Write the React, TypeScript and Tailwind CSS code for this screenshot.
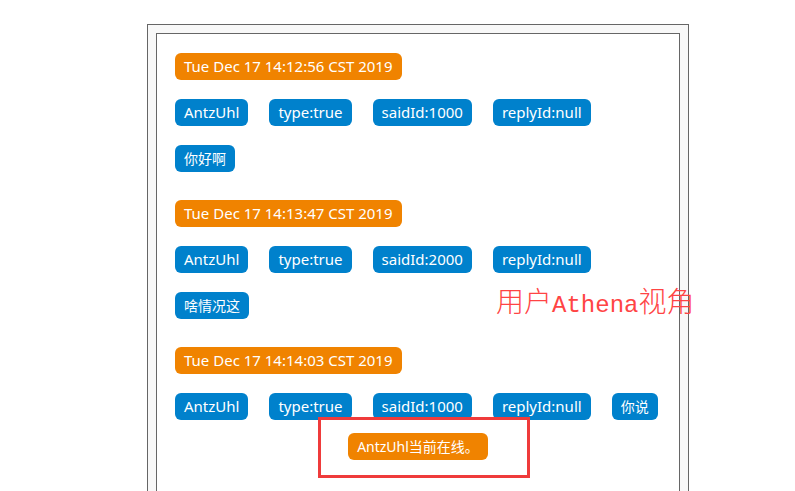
const font = { fontFamily: '"Noto Sans", "Noto Sans CJK SC", sans-serif' };

type Msg = {
  time: string;
  said: string;
  text: string;
  inline?: boolean;
};

const messages: Msg[] = [
  { time: "Tue Dec 17 14:12:56 CST 2019", said: "1000", text: "你好啊" },
  { time: "Tue Dec 17 14:13:47 CST 2019", said: "2000", text: "啥情况这" },
  { time: "Tue Dec 17 14:14:03 CST 2019", said: "1000", text: "你说", inline: true },
];

const Orange = ({ children }: { children: React.ReactNode }) => (
  <span className="inline-block whitespace-nowrap h-[27px] leading-[27px] px-[9px] rounded-[6px] bg-[#f08300] text-white text-[15px]">
    {children}
  </span>
);

const Blue = ({ children, cjk }: { children: React.ReactNode; cjk?: boolean }) => (
  <span
    className={
      cjk
        ? "inline-block shrink-0 whitespace-nowrap h-[27px] leading-[27px] px-[9px] rounded-[6px] bg-[#0081cc] text-white text-[14px]"
        : "inline-block shrink-0 whitespace-nowrap h-[27px] leading-[27px] px-[9px] rounded-[6px] bg-[#0081cc] text-white text-[15px]"
    }
  >
    {children}
  </span>
);

export default function App() {
  return (
    <div className="relative w-[795px] h-[491px] overflow-hidden bg-white" style={font}>
      <div className="ml-[147px] mt-[24px] w-[542px] h-[520px] border border-[#666] bg-[#f8f8f8] p-[8px]">
        <div className="h-full border border-[#666] bg-white pt-[19px] px-[18px]">
          {messages.map((m, i) => (
            <div key={i} className={i === 0 ? "flex flex-col items-start" : "flex flex-col items-start mt-[28px]"}>
              <Orange>{m.time}</Orange>
              <div className="flex gap-[21px] mt-[19px]">
                <Blue>AntzUhl</Blue>
                <Blue>type:true</Blue>
                <Blue>saidId:{m.said}</Blue>
                <Blue>replyId:null</Blue>
                {m.inline && <Blue cjk>{m.text}</Blue>}
              </div>
              {!m.inline && (
                <div className="mt-[19px]">
                  <Blue cjk>{m.text}</Blue>
                </div>
              )}
            </div>
          ))}
          <div className="flex justify-center mt-[13px] -mx-[18px]">
            <Orange>
              <span className="text-[14px]">AntzUhl当前在线。</span>
            </Orange>
          </div>
        </div>
      </div>

      {/* annotation overlay */}
      <div className="absolute left-[318px] top-[417px] w-[212px] h-[61px] border-[3px] border-[#ef3b3b]" />
      <div
        className="absolute left-[496px] top-[283px] text-[#f44] text-[28px] leading-[34px] whitespace-nowrap"
        style={{ fontFamily: '"Noto Sans CJK SC", serif' }}
      >
        <span className="font-light">用户</span>
        <span className="text-[24px]" style={{ fontFamily: '"Liberation Mono", monospace' }}>
          Athena
        </span>
        <span className="font-light">视角</span>
      </div>
    </div>
  );
}
